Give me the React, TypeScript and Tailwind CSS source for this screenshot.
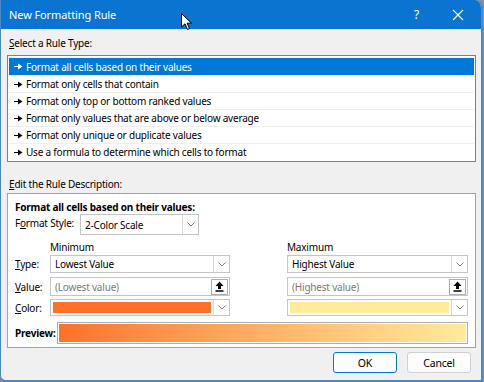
const font = { fontFamily: '"Noto Sans", "Liberation Sans", sans-serif' };

const rules = [
  "Format all cells based on their values",
  "Format only cells that contain",
  "Format only top or bottom ranked values",
  "Format only values that are above or below average",
  "Format only unique or duplicate values",
  "Use a formula to determine which cells to format",
];

function Pointer({ white }: { white?: boolean }) {
  return (
    <svg width="9" height="7" viewBox="0 0 9 7" className="shrink-0">
      <path d="M0 3.5h5" stroke={white ? "#fff" : "#000"} strokeWidth="1" />
      <path d="M4 0.5L8.5 3.5L4 6.5z" fill={white ? "#fff" : "#000"} />
    </svg>
  );
}

function Chevron() {
  return (
    <div className="w-[16px] h-full flex items-center justify-center border-l border-[#d6d6d6] bg-white">
      <svg width="8" height="5" viewBox="0 0 8 5">
        <path d="M0.5 0.5L4 4L7.5 0.5" fill="none" stroke="#7a7a7a" strokeWidth="1" />
      </svg>
    </div>
  );
}

function Upload() {
  return (
    <div className="w-[17px] h-[16px] mr-[1px] flex items-center justify-center border border-[#adadad] bg-white">
      <svg width="9" height="11" viewBox="0 0 9 11">
        <path d="M4.5 0.5L8.5 5H6V8H3V5H0.5z" fill="#000" />
        <path d="M0.5 10h8" stroke="#000" strokeWidth="1.4" />
      </svg>
    </div>
  );
}

function Select({ text, w, h = "h-[18px]" }: { text: string; w: string; h?: string }) {
  return (
    <div className={`${w} ${h} flex items-stretch border border-[#c4c4c4] bg-white`}>
      <div className="flex-1 pl-[4px] flex items-center text-[#000]">{text}</div>
      <Chevron />
    </div>
  );
}

function ValueBox({ text, w }: { text: string; w: string }) {
  return (
    <div className={`${w} h-[19px] flex items-center border border-[#c4c4c4] bg-white`}>
      <div className="flex-1 pl-[4px] text-[#7a7a7a]">{text}</div>
      <Upload />
    </div>
  );
}

function ColorBox({ color, w }: { color: string; w: string }) {
  return (
    <div className={`${w} h-[17px] flex items-stretch border border-[#c4c4c4] bg-white`}>
      <div className="flex-1 m-[2px]" style={{ backgroundColor: color }} />
      <Chevron />
    </div>
  );
}

export default function App() {
  return (
    <div className="w-[484px] h-[382px] bg-[#8c8c8c] text-[10px] tracking-[-0.2px] leading-[14px] text-black" style={font}>
      <div className="relative w-[483px] h-[382px] flex flex-col rounded-tr-[8px] rounded-bl-[6px] overflow-hidden border-l border-b-2 border-r-2 border-[#4a88c9] bg-[#f0f0f0]">
        {/* Title bar */}
        <div className="h-[29px] shrink-0 bg-[#0a74d0] flex items-center pl-[8px] text-white">
          <span className="text-[11px] tracking-[-0.1px]">New Formatting Rule</span>
          <span className="ml-auto mr-[33px] text-[12px]">?</span>
          <svg width="12" height="12" viewBox="0 0 12 12" className="mr-[17px]">
            <path d="M1 1L11 11M11 1L1 11" stroke="#fff" strokeWidth="1.1" />
          </svg>
        </div>

        {/* Mouse cursor */}
        <svg width="12" height="18" viewBox="0 0 12 18" className="absolute left-[180px] top-[13px]">
          <path d="M0.5 0.5V14L4 10.8L6.5 16.5L8.5 15.6L6.1 10.2H10.5z" fill="#fff" stroke="#000" strokeWidth="1" />
        </svg>

        <div className="flex-1 flex flex-col pl-[6px] pr-[6px]">
          <div className="mt-[7px] pl-[2px]"><u>S</u>elect a Rule Type:</div>

          <div className="mt-[5px] w-[469px] h-[107px] border border-[#7f7f7f] bg-white p-[1px]">
            <div className="border-b border-[#f7f7f7]" />
            {rules.map((r, i) => (
              <div
                key={r}
                className={`h-[17px] flex items-center gap-[3px] pl-[5px] ${i === 0 ? "bg-[#0078d7] text-white" : "border-t border-[#efefef]"}`}
              >
                <Pointer white={i === 0} />
                <span>{r}</span>
              </div>
            ))}
          </div>

          <div className="mt-[15px] pl-[2px]"><u>E</u>dit the Rule Description:</div>

          <div className="mt-[2px] w-[469px] h-[155px] border border-[#a3a3a3] bg-white pl-[7px] pt-[6px]">
            <div className="font-bold">Format all cells based on their values:</div>
            <div className="mt-[0px] flex items-center">
              <div className="w-[65px] -mt-[3px]">F<u>o</u>rmat Style:</div>
              <Select text="2-Color Scale" w="w-[119px]" h="h-[21px]" />
            </div>

            <div className="mt-[5px] flex">
              <div className="w-[35px]" />
              <div className="w-[237px]">Minimum</div>
              <div>Maximum</div>
            </div>

            <div className="mt-[1px] flex items-center">
              <div className="w-[35px]"><u>T</u>ype:</div>
              <Select text="Lowest Value" w="w-[180px]" />
              <div className="w-[57px]" />
              <Select text="Highest Value" w="w-[181px]" />
            </div>

            <div className="mt-[4px] flex items-center">
              <div className="w-[35px]"><u>V</u>alue:</div>
              <ValueBox text="(Lowest value)" w="w-[180px]" />
              <div className="w-[57px]" />
              <ValueBox text="(Highest value)" w="w-[181px]" />
            </div>

            <div className="mt-[3px] flex items-center">
              <div className="w-[35px]"><u>C</u>olor:</div>
              <ColorBox color="#ff7128" w="w-[180px]" />
              <div className="w-[57px]" />
              <ColorBox color="#ffeb9c" w="w-[181px]" />
            </div>

            <div className="mt-[6px] flex items-center">
              <div className="w-[42px] font-bold">Preview:</div>
              <div className="w-[411px] h-[22px] border border-[#adadad] p-[1px]">
                <div className="w-full h-full bg-linear-to-r from-[#ff7128] to-[#ffeb9c]" />
              </div>
            </div>
          </div>

          <div className="mt-[4px] flex justify-end gap-[10px] pr-[4px]">
            <button className="w-[64px] h-[21px] border border-[#0078d7] rounded-[3px] bg-[#fdfdfd] text-[10.5px]">OK</button>
            <button className="w-[64px] h-[21px] border border-[#d0d0d0] rounded-[3px] bg-[#fdfdfd] text-[10.5px]">Cancel</button>
          </div>
        </div>
      </div>
    </div>
  );
}
